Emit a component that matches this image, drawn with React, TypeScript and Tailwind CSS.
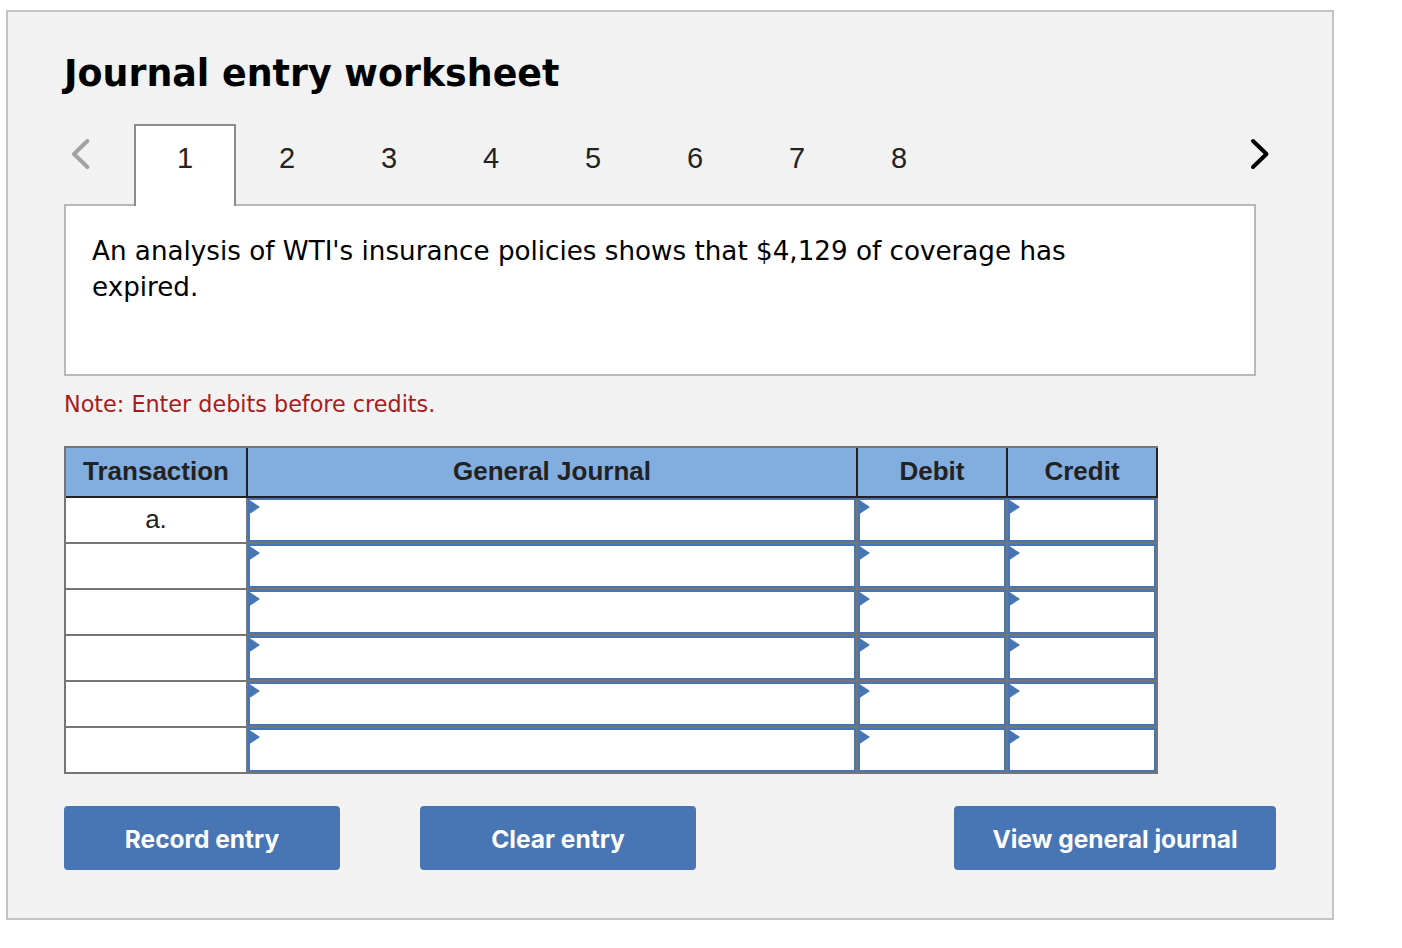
const TABS = [1, 2, 3, 4, 5, 6, 7, 8];
const ROWS = ["a.", "", "", "", "", ""];

function Chevron({ dir, color }: { dir: "left" | "right"; color: string }) {
  return (
    <svg width="20" height="32" viewBox="0 0 20 32" fill="none" className="block">
      <path
        d={dir === "left" ? "M17.3 3 L4 16 L17.3 29" : "M3 3 L16.5 16 L3 29"}
        stroke={color}
        strokeWidth="4"
        strokeLinecap="round"
        strokeLinejoin="round"
      />
    </svg>
  );
}

function EntryCell() {
  return (
    <div className="relative h-full border-2 border-[#4875b4] bg-white">
      <svg width="12" height="16" viewBox="0 0 12 16" className="absolute -left-[2px] -top-[1px]">
        <polygon points="0,0 12,8 0,16" fill="#4875b4" />
      </svg>
    </div>
  );
}

const headCell =
  "flex items-center justify-center border-r-2 border-r-[#222] pb-[2px] text-[26px] font-bold text-[#222] [font-family:'Liberation_Sans',sans-serif]";

function JournalTable() {
  return (
    <div className="mt-[28px] w-[1094px] border-t-2 border-l-2 border-[#757575]">
      <div className="grid h-[50px] grid-cols-[182px_610px_150px_150px] border-b-2 border-b-[#222] bg-[#82addf]">
        <div className={headCell}>Transaction</div>
        <div className={headCell}>General Journal</div>
        <div className={headCell}>Debit</div>
        <div className={headCell}>Credit</div>
      </div>
      {ROWS.map((label, i) => (
        <div key={i} className="grid h-[46px] grid-cols-[182px_610px_150px_150px] bg-[#757575]">
          <div className="mr-[2px] mb-[2px] flex items-center justify-center bg-white pb-[2px] text-[26px] text-[#222] [font-family:'Liberation_Sans',sans-serif]">
            {label}
          </div>
          <div className="mr-[2px] mb-[2px]">
            <EntryCell />
          </div>
          <div className="mr-[2px] mb-[2px]">
            <EntryCell />
          </div>
          <div className="mr-[2px] mb-[2px]">
            <EntryCell />
          </div>
        </div>
      ))}
    </div>
  );
}

const btn =
  "flex h-[64px] items-center justify-center rounded-[4px] bg-[#4875b4] pt-[3px] text-[24.5px] font-bold text-white [font-family:Inter,sans-serif]";

export default function App() {
  return (
    <div className="min-h-[948px] bg-white pt-[10px] pl-[6px]">
      <div className="h-[910px] w-[1328px] border-2 border-[#c4c4c4] bg-[#f2f2f2] px-[56px] [font-family:'DejaVu_Sans',sans-serif]">
        <h1 className="mt-[37px] text-[36.4px] leading-[50px] font-bold text-black">Journal entry worksheet</h1>

        <div className="mt-[25px] -mb-[2px] flex h-[82px] items-start">
          <div className="flex h-[60px] w-[70px] items-center pl-[6px]">
            <Chevron dir="left" color="#a3a3a3" />
          </div>
          {TABS.map((n) => (
            <div
              key={n}
              className={`flex h-full w-[102px] justify-center text-[29px] leading-[36px] text-[#222] [font-family:'Liberation_Sans',sans-serif] ${
                n === 1 ? "z-10 border-2 border-b-0 border-[#8c8c8c] bg-white pt-[14px]" : "pt-[16px]"
              }`}
            >
              {n}
            </div>
          ))}
          <div className="mr-[6px] ml-auto flex h-[60px] items-center">
            <Chevron dir="right" color="#000" />
          </div>
        </div>

        <div className="h-[172px] w-[1192px] border-2 border-[#b8b8b8] bg-white px-[26px] pt-[27px] text-[26.2px] leading-[36px] text-black">
          <p className="w-[1060px]">An analysis of WTI's insurance policies shows that $4,129 of coverage has expired.</p>
        </div>

        <p className="mt-[14px] text-[22.3px] leading-[28px] text-[#a61c1c]">Note: Enter debits before credits.</p>

        <JournalTable />

        <div className="mt-[32px] flex">
          <button className={`${btn} w-[276px]`}>Record entry</button>
          <button className={`${btn} ml-[80px] w-[276px]`}>Clear entry</button>
          <button className={`${btn} ml-auto w-[322px]`}>View general journal</button>
        </div>
      </div>
    </div>
  );
}
